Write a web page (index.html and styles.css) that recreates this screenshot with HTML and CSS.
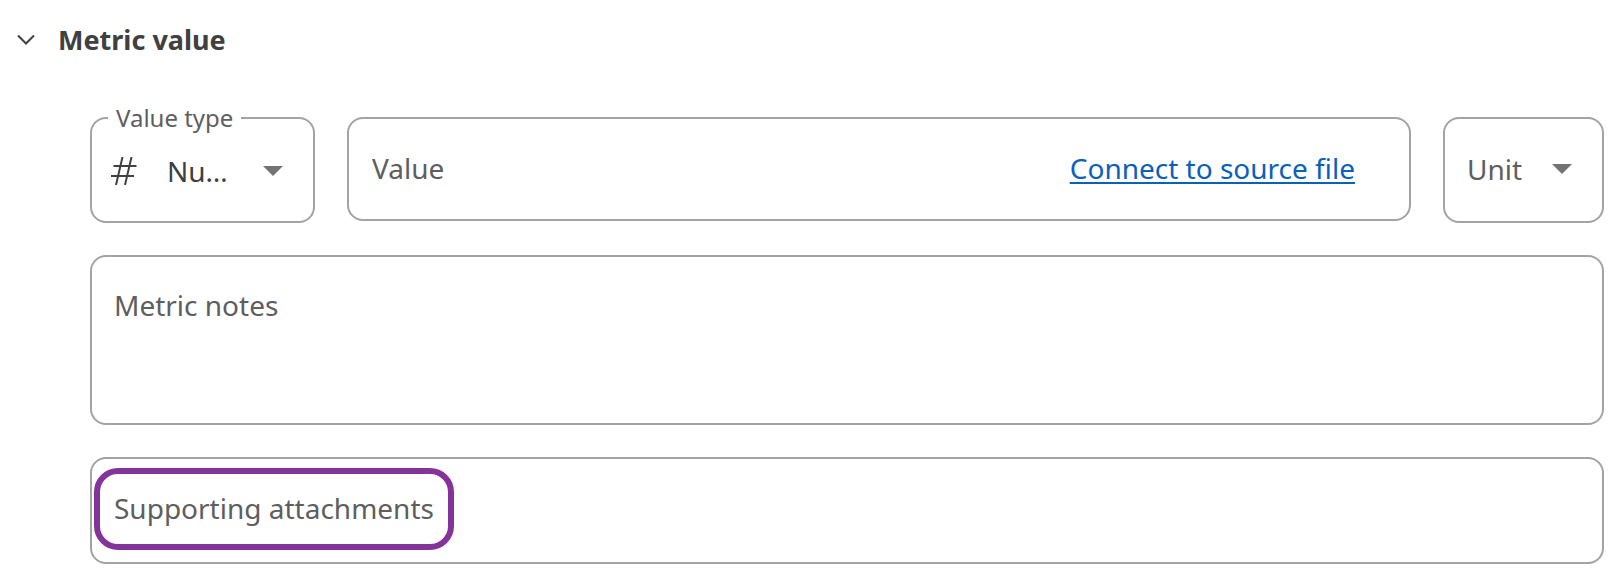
FILE: index.html
```html
<!DOCTYPE html>
<html lang="en">
<head>
<meta charset="utf-8">
<title>Metric value</title>
<link rel="stylesheet" href="styles.css">
</head>
<body>
<section class="section">
  <header class="section-header">
    <button class="toggle" type="button" aria-expanded="true" aria-controls="metric-form" aria-label="Collapse Metric value">
      <svg width="20" height="12" viewBox="0 0 20 12" aria-hidden="true"><path d="M2 1.5l8 8 8-8" fill="none" stroke="currentColor" stroke-width="2"/></svg>
    </button>
    <h2 class="title">Metric value</h2>
  </header>
  <form class="form" id="metric-form">
    <div class="row">
      <fieldset class="field type-field">
        <legend class="legend"><label for="value-type">Value type</label></legend>
        <div class="type-control">
          <svg class="hash" width="26" height="28" viewBox="0 0 26 28" aria-hidden="true"><path d="M11.5 0L5 28M20.5 0L14 28M2.5 9H25.5M0 19H23" fill="none" stroke="currentColor" stroke-width="2"/></svg>
          <select class="select type-select" id="value-type"><option>Number</option></select>
          <svg class="arrow" width="20" height="10" viewBox="0 0 20 10" aria-hidden="true"><path d="M0 0H20L10 10z" fill="currentColor"/></svg>
        </div>
      </fieldset>
      <div class="field value-field">
        <input class="input" type="text" placeholder="Value" aria-label="Value">
        <a class="link" href="#source">Connect to source file</a>
      </div>
      <div class="field unit-field">
        <select class="select unit-select" aria-label="Unit"><option>Unit</option></select>
        <svg class="arrow" width="20" height="10" viewBox="0 0 20 10" aria-hidden="true"><path d="M0 0H20L10 10z" fill="currentColor"/></svg>
      </div>
    </div>
    <textarea class="field notes" rows="3" placeholder="Metric notes" aria-label="Metric notes"></textarea>
    <div class="field attachments">
      <button class="attach" type="button">Supporting attachments</button>
    </div>
  </form>
</section>
</body>
</html>
```
FILE: styles.css
```css
* { box-sizing: border-box; }

body {
  margin: 0;
  background: #fff;
  color: #404040;
  font-family: "Noto Sans", sans-serif;
  font-size: 28px;
  line-height: 40px;
}

.section { padding: 20px 16px; }

.section-header {
  display: flex;
  align-items: center;
  gap: 22px;
}

.toggle {
  display: flex;
  padding: 0;
  border: 0;
  background: none;
  color: #404040;
}

.title {
  margin: 0;
  font-size: 27px;
  font-weight: 700;
  line-height: 40px;
}

.form {
  display: flex;
  flex-direction: column;
  gap: 32px;
  margin-top: 57px;
  padding-left: 74px;
}

.row {
  display: flex;
  align-items: flex-start;
  gap: 32px;
}

.field {
  border: 2px solid #a3a3a3;
  border-radius: 16px;
  background: #fff;
}

.type-field {
  flex: none;
  width: 225px;
  min-width: 0;
  margin: -11px 0 0;
  padding: 0 30px 0 19px;
}

.legend {
  margin-left: -3px;
  padding: 0 8px;
  color: #5e5e5e;
  font-size: 24px;
  line-height: 24px;
}

.type-control {
  display: flex;
  align-items: center;
  height: 91px;
  padding-bottom: 10px;
}

.hash { flex: none; }

.select {
  min-width: 0;
  padding: 0;
  border: 0;
  appearance: none;
  background: none;
  font: inherit;
}

.type-select {
  width: 66px;
  margin-left: 30px;
  color: #404040;
  overflow: hidden;
  text-overflow: ellipsis;
  white-space: nowrap;
}

.arrow {
  flex: none;
  margin-left: auto;
  color: #737373;
}

.value-field {
  flex: 1;
  display: flex;
  align-items: center;
  min-width: 0;
  height: 104px;
  padding: 0 54px 2px 23px;
}

.input {
  flex: 1;
  min-width: 0;
  padding: 0;
  border: 0;
  background: none;
  color: #404040;
  font: inherit;
}

.input::placeholder,
.notes::placeholder {
  color: #5e5e5e;
  opacity: 1;
}

.link {
  color: #0a60bd;
  text-decoration-thickness: 2px;
  text-underline-offset: 3px;
}

.unit-field {
  flex: none;
  display: flex;
  align-items: center;
  width: 161px;
  height: 106px;
  padding: 0 30px 2px 22px;
}

.unit-select { color: #5e5e5e; }

.notes {
  display: block;
  width: 100%;
  height: 170px;
  padding: 28px 22px;
  color: #404040;
  font: inherit;
  resize: none;
}

.attachments {
  display: flex;
  padding: 9px 2px 12px;
}

.attach {
  padding: 14px 14px 16px;
  border: 6px solid #833399;
  border-radius: 24px;
  background: #fff;
  color: #5e5e5e;
  font: inherit;
}
```
